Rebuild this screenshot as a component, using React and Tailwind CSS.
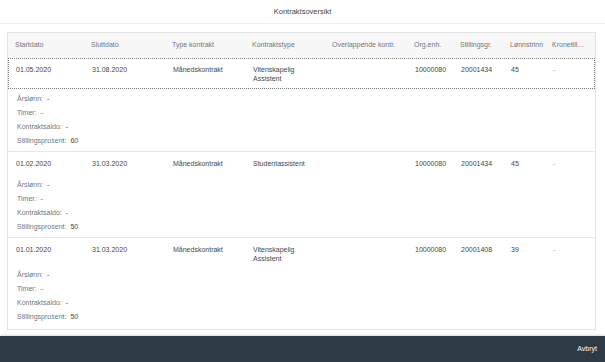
import React from "react";

// Kontraktsoversikt – dialog med kontraktliste og detaljer per rad
const columns = [
  "Startdato",
  "Sluttdato",
  "Type kontrakt",
  "Kontraktstype",
  "Overlappende kontr.",
  "Org.enh.",
  "Stillingsgr.",
  "Lønnstrinn",
  "Kronetillegg",
];

const contracts = [
  {
    id: 1,
    start: "01.05.2020",
    end: "31.08.2020",
    type: "Månedskontrakt",
    kind: ["Vitenskapelig", "Assistent"],
    org: "10000080",
    grade: "20001434",
    step: "45",
    percent: "60",
    focused: true,
  },
  {
    id: 2,
    start: "01.02.2020",
    end: "31.03.2020",
    type: "Månedskontrakt",
    kind: ["Studentassistent"],
    org: "10000080",
    grade: "20001434",
    step: "45",
    percent: "50",
  },
  {
    id: 3,
    start: "01.01.2020",
    end: "31.03.2020",
    type: "Månedskontrakt",
    kind: ["Vitenskapelig", "Assistent"],
    org: "10000080",
    grade: "20001408",
    step: "39",
    percent: "50",
  },
];

const grid = "grid grid-cols-[76px_81px_80px_80px_82px_46px_50px_42px_1fr] pl-[7px]";

function Cell({ children, className = "" }) {
  return <div className={`pr-1 min-w-0 ${className}`}>{children}</div>;
}

function ContractRow({ c, last }) {
  return (
    <div className={last ? "" : "border-b border-[#e8e8e8]"}>
      <div
        className={`${grid} min-h-[26px] pt-[6px] leading-[9px] text-[#44474a] border ${
          c.focused ? "border-dotted border-[#7a7a7a] pb-[5px]" : "border-transparent pb-[4px]"
        }`}
      >
        <Cell>{c.start}</Cell>
        <Cell>{c.end}</Cell>
        <Cell>{c.type}</Cell>
        <Cell>
          {c.kind.map((k) => (
            <div key={k}>{k}</div>
          ))}
        </Cell>
        <Cell />
        <Cell>{c.org}</Cell>
        <Cell>{c.grade}</Cell>
        <Cell>{c.step}</Cell>
        <Cell className="text-[#9a9da0]">-</Cell>
      </div>
      <div className={`pl-[9px] ${c.focused ? "pt-[3px]" : ""} ${last ? "pb-[5px]" : "pb-[3px]"}`}>
        {[
          ["Årslønn:", "-"],
          ["Timer:", "-"],
          ["Kontraktsaldo:", "-"],
          ["Stillingsprosent:", c.percent],
        ].map(([label, val]) => (
          <div key={label} className="h-[14px] flex items-center gap-[4px]">
            <span className="text-[#73767a]">{label}</span>
            <span className="text-[#44474a]">{val}</span>
          </div>
        ))}
      </div>
    </div>
  );
}

export default function App() {
  return (
    <div
      className="w-[605px] h-[362px] bg-white flex flex-col text-[7px] overflow-hidden antialiased"
      style={{ fontFamily: '"Liberation Sans", Arial, sans-serif' }}
    >
      {/* tittel */}
      <div className="h-[24px] flex items-center justify-center border-b border-[#ededed] text-[7.5px] text-[#44474a]">
        Kontraktsoversikt
      </div>

      {/* tabell */}
      <div className="flex-1 pl-[7px] pr-[9px] pt-[8px]">
        <div className="border border-[#e2e2e2] bg-white">
          <div className={`${grid} h-[25px] items-center bg-[#f7f7f7] text-[#73767a]`}>
            {columns.map((col, i) => (
              <Cell key={col} className={i === columns.length - 1 ? "truncate max-w-[40px]" : "truncate"}>
                {col}
              </Cell>
            ))}
          </div>
          {contracts.map((c, i) => (
            <ContractRow key={c.id} c={c} last={i === contracts.length - 1} />
          ))}
        </div>
      </div>

      {/* bunnlinje */}
      <div className="h-[26px] bg-[#2e3a46] flex items-center justify-end pr-[8px] shadow-[0_-1px_2px_rgba(0,0,0,0.15)]">
        <span className="text-white text-[7px]">Avbryt</span>
      </div>
    </div>
  );
}
